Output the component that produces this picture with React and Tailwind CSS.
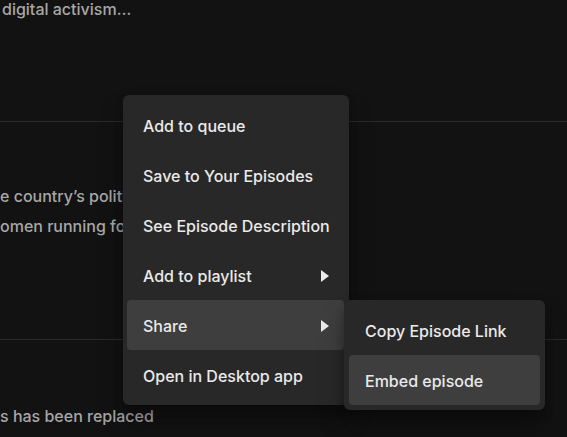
import React from 'react';

const mainItems = [
  { label: 'Add to queue' },
  { label: 'Save to Your Episodes' },
  { label: 'See Episode Description' },
  { label: 'Add to playlist', sub: true },
  { label: 'Share', sub: true, active: true },
  { label: 'Open in Desktop app' },
];

const shareItems = [
  { label: 'Copy Episode Link' },
  { label: 'Embed episode', active: true },
];

function Caret() {
  return (
    <svg width="8" height="12" viewBox="0 0 8 12" className="shrink-0">
      <path d="M0 0 L8 6 L0 12 Z" fill="#eaeaea" />
    </svg>
  );
}

function MenuItem({ label, sub, active }) {
  return (
    <div
      className={`flex h-[50px] items-center justify-between rounded-sm pl-4 pr-[15px] pt-[2px] ${
        active ? 'bg-[#3e3e3e]' : ''
      }`}
    >
      <span className="whitespace-nowrap text-[16px] font-medium text-[#eaeaea]">{label}</span>
      {sub && <Caret />}
    </div>
  );
}

export default function App() {
  return (
    <div
      className="relative h-[437px] w-[567px] overflow-hidden bg-[#121212]"
      style={{ fontFamily: 'Inter, "Noto Sans", sans-serif' }}
    >
      {/* page content behind the menu */}
      <div className="text-[16px] font-medium text-[#a7a7a7]">
        <p className="-mt-[3px] ml-[2px] leading-6">digital activism…</p>
        <div className="mt-[100px] h-px bg-[#2a2a2a]" />
        <div className="mt-[59px] whitespace-nowrap leading-[30px]">
          <p>e country’s political landscape and the</p>
          <p>omen running for office across the region</p>
        </div>
        <div className="mt-[98px] h-px bg-[#2a2a2a]" />
        <p className="mt-[61px] leading-[30px]">s has been replaced</p>
      </div>

      {/* context menu */}
      <div className="absolute left-[123px] top-[95px] w-[226px] rounded-md bg-[#282828] py-[5px] pl-1 pr-[5px] shadow-[0_16px_24px_rgba(0,0,0,0.3),0_6px_8px_rgba(0,0,0,0.2)]">
        {mainItems.map((item) => (
          <MenuItem key={item.label} {...item} />
        ))}
      </div>

      {/* share submenu */}
      <div className="absolute left-[344px] top-[300px] w-[201px] rounded-md bg-[#282828] px-[5px] py-[5px] shadow-[0_16px_24px_rgba(0,0,0,0.3),0_6px_8px_rgba(0,0,0,0.2)]">
        {shareItems.map((item) => (
          <MenuItem key={item.label} {...item} />
        ))}
      </div>
    </div>
  );
}
